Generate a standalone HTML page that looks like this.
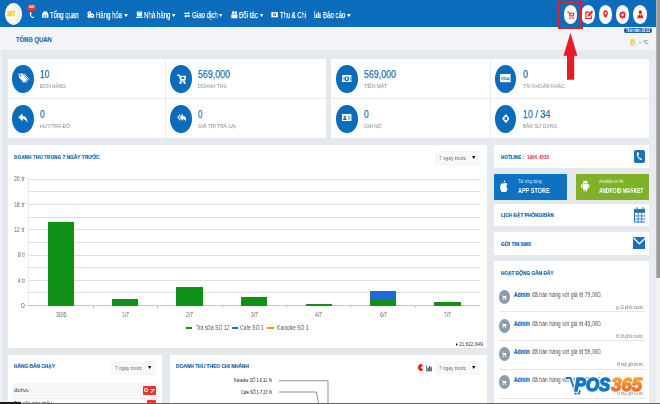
<!DOCTYPE html>
<html><head><meta charset="utf-8">
<style>
*{box-sizing:border-box;margin:0;padding:0}
html,body{width:660px;height:404px;overflow:hidden}
body{font-family:"Liberation Sans",sans-serif;background:#e5e9ed;position:relative}
.a{position:absolute}
.t{position:absolute;white-space:nowrap;transform-origin:0 0;will-change:transform}
</style></head><body>
<div class="a" style="left:0.00px;top:0.00px;width:660.00px;height:26.50px;background:#0c6cbc;"></div>
<div class="a" style="left:0.00px;top:26.50px;width:660.00px;height:23.50px;background:#f3f4f7;"></div>
<div class="a" style="left:5.05px;top:2.75px;width:17.40px;height:22.20px;background:#fffdf8;border-radius:50%;"></div>
<svg class="a" style="left:5px;top:2.5px" width="18" height="23" viewBox="5 2.5 18 23"><path d="M12.5 4.6A7.2 9.3 0 0 1 12.5 23.2" fill="none" stroke="#f9c483" stroke-width="1.1" stroke-dasharray="0.9 0.9"/><path d="M13 7A4.8 6.8 0 0 1 13 20.8" fill="none" stroke="#fbdcb0" stroke-width="0.8" stroke-dasharray="0.7 0.9"/></svg>
<div class="t" style="left:7.20px;top:9.96px;font-size:7.85px;line-height:7.85px;color:#f5c414;transform:scaleX(0.6261);font-weight:bold;font-style:italic;-webkit-text-stroke:0.3px #f5c414;">365</div>
<div class="a" style="left:27.10px;top:4.90px;width:9.00px;height:6.20px;background:#e8382d;border-radius:50%;"></div>
<div class="t" style="left:28.80px;top:6.35px;font-size:3.49px;line-height:3.49px;color:#fff;transform:scaleX(0.8542);font-weight:bold;">24/7</div>
<svg class="a" style="left:28.7px;top:11.6px" width="5.6" height="6.6" viewBox="0 0 6 7" preserveAspectRatio="none"><path d="M1.3 0.3 C0.2 1.6 1.2 5.4 4.3 6.6 C5 6.7 5.5 6.1 5.6 5.6 L4.5 4.7 L3.8 5.3 C2.6 4.6 2.2 3.2 2.2 2.3 L2.9 1.9 L2.3 0.3 Z" fill="#fff"/></svg>
<div class="t" style="left:50.40px;top:11.15px;font-size:9.16px;line-height:9.16px;color:#fff;transform:scaleX(0.6509);-webkit-text-stroke:0.25px #fff;">Tổng quan</div>
<div class="t" style="left:96.30px;top:11.15px;font-size:9.16px;line-height:9.16px;color:#fff;transform:scaleX(0.6572);-webkit-text-stroke:0.25px #fff;">Hàng hóa</div>
<svg class="a" style="left:123.9px;top:14px" width="3.9" height="3.2" viewBox="0 0 10 10" preserveAspectRatio="none"><path d="M0 0H10L5 10Z" fill="#fff"/></svg>
<div class="t" style="left:144.40px;top:11.15px;font-size:9.16px;line-height:9.16px;color:#fff;transform:scaleX(0.6673);-webkit-text-stroke:0.25px #fff;">Nhà hàng</div>
<svg class="a" style="left:172.4px;top:14px" width="3.4" height="3.2" viewBox="0 0 10 10" preserveAspectRatio="none"><path d="M0 0H10L5 10Z" fill="#fff"/></svg>
<div class="t" style="left:191.80px;top:11.15px;font-size:9.16px;line-height:9.16px;color:#fff;transform:scaleX(0.6669);-webkit-text-stroke:0.25px #fff;">Giao dịch</div>
<svg class="a" style="left:219px;top:14px" width="3.4" height="3.2" viewBox="0 0 10 10" preserveAspectRatio="none"><path d="M0 0H10L5 10Z" fill="#fff"/></svg>
<div class="t" style="left:238.80px;top:11.15px;font-size:9.16px;line-height:9.16px;color:#fff;transform:scaleX(0.6596);-webkit-text-stroke:0.25px #fff;">Đối tác</div>
<svg class="a" style="left:259.6px;top:14px" width="3.4" height="3.2" viewBox="0 0 10 10" preserveAspectRatio="none"><path d="M0 0H10L5 10Z" fill="#fff"/></svg>
<div class="t" style="left:279.80px;top:11.15px;font-size:9.16px;line-height:9.16px;color:#fff;transform:scaleX(0.6386);-webkit-text-stroke:0.25px #fff;">Thu &amp; Chi</div>
<div class="t" style="left:323.20px;top:11.15px;font-size:9.16px;line-height:9.16px;color:#fff;transform:scaleX(0.6637);-webkit-text-stroke:0.25px #fff;">Báo cáo</div>
<svg class="a" style="left:347.4px;top:14px" width="3.8" height="3.2" viewBox="0 0 10 10" preserveAspectRatio="none"><path d="M0 0H10L5 10Z" fill="#fff"/></svg>
<svg class="a" style="left:42px;top:11.3px" width="6.6" height="7.4" viewBox="0 0 10 10" preserveAspectRatio="none"><path d="M5 0.4C2 0.4 0.3 2.8 0.3 5.6V9.6H9.7V5.6C9.7 2.8 8 0.4 5 0.4Z" fill="#fff"/><path d="M2.2 5.4H4.4V9.6H2.2ZM5.6 5.4H7.8V9.6H5.6Z" fill="#0c6cbc" opacity=".55"/><path d="M1.6 4.2H8.4" stroke="#0c6cbc" stroke-width="0.7" opacity=".5"/></svg>
<svg class="a" style="left:87.2px;top:11.3px" width="7.6" height="7.4" viewBox="0 0 10 10" preserveAspectRatio="none"><circle cx="3.2" cy="3" r="2.6" fill="#fff"/><circle cx="6.8" cy="6.5" r="3" fill="#fff"/><circle cx="3" cy="7" r="2.4" fill="#fff"/><circle cx="3.2" cy="3" r="1" fill="#0c6cbc"/><circle cx="6.8" cy="6.5" r="1.1" fill="#0c6cbc"/></svg>
<svg class="a" style="left:136px;top:11.3px" width="6.9" height="7.4" viewBox="0 0 10 10" preserveAspectRatio="none"><path d="M1.2 0.6H8.8V5.2C8.8 6.4 8 7 7 7H3C2 7 1.2 6.4 1.2 5.2ZM0.2 7.8H9.8V9.6H0.2Z" fill="#fff"/><path d="M2.6 1.8H7.4V2.8H2.6Z" fill="#0c6cbc" opacity=".6"/></svg>
<svg class="a" style="left:184.2px;top:11.3px" width="6.1" height="7.4" viewBox="0 0 10 10" preserveAspectRatio="none"><path d="M0.3 2.2H6.8V0.6L9.8 3.2L6.8 5V4.2H0.3ZM9.7 5.9V7.9H3.2V9.4L0.2 6.9L3.2 5V5.9Z" fill="#fff"/></svg>
<svg class="a" style="left:230.8px;top:11.3px" width="6.8" height="7.4" viewBox="0 0 10 10" preserveAspectRatio="none"><circle cx="3" cy="2.2" r="1.9" fill="#fff"/><circle cx="7" cy="2.2" r="1.9" fill="#fff"/><path d="M0.5 4.5H9.5V9.8H0.5Z" fill="#fff"/></svg>
<svg class="a" style="left:271.3px;top:11.3px" width="7.2" height="7.4" viewBox="0 0 10 10" preserveAspectRatio="none"><path d="M0.5 1.5H9.5V8.5H0.5Z" fill="#fff"/><circle cx="5" cy="5" r="2.2" fill="#0c6cbc"/><circle cx="5" cy="5" r="1" fill="#fff"/></svg>
<svg class="a" style="left:314.4px;top:11.3px" width="7.3" height="7.4" viewBox="0 0 10 10" preserveAspectRatio="none"><path d="M0.5 0.5H1.6V8.4H9.5V9.5H0.5ZM2.6 4H4.2V8H2.6ZM5 1.5H6.6V8H5ZM7.4 3H9V8H7.4Z" fill="#fff"/></svg>
<div class="a" style="left:563.95px;top:5.40px;width:13.50px;height:18.40px;background:#fff;border-radius:50%;"></div>
<div class="a" style="left:581.25px;top:5.40px;width:13.50px;height:18.40px;background:#fff;border-radius:50%;"></div>
<div class="a" style="left:598.55px;top:5.40px;width:13.50px;height:18.40px;background:#fff;border-radius:50%;"></div>
<div class="a" style="left:615.85px;top:5.40px;width:13.50px;height:18.40px;background:#fff;border-radius:50%;"></div>
<div class="a" style="left:633.25px;top:5.40px;width:13.50px;height:18.40px;background:#fff;border-radius:50%;"></div>
<svg class="a" style="left:567.3px;top:10.7px" width="7.6" height="8.5" viewBox="0 0 10 10" preserveAspectRatio="none"><path d="M0.2 0.6H2.4L3 2.2H9.8L8.8 6.2H3.8L2 1.8H0.2Z" fill="#e8202a"/><path d="M4.6 3.2H7.8V5H4.6Z" fill="#fff"/><path d="M3.2 6.7H8.8V7.5H3.2Z" fill="#e8202a"/><circle cx="3.9" cy="8.8" r="1" fill="#e8202a"/><circle cx="8" cy="8.8" r="1" fill="#e8202a"/></svg>
<svg class="a" style="left:584.5px;top:9.5px" width="8.2" height="9.5" viewBox="0 0 10 10" preserveAspectRatio="none"><path d="M0.4 1.6H5.6V3H1.8V8.4H7V5.6H8.4V9.8H0.4Z" fill="#e8202a"/><path d="M3.4 7L3.9 4.8L8.2 0.3L9.9 2L5.6 6.5Z" fill="#e8202a"/></svg>
<svg class="a" style="left:602.8px;top:10.4px" width="5.1" height="8.2" viewBox="0 0 10 10" preserveAspectRatio="none"><path d="M5 0.2C2 0.2 0.4 2 0.4 4C0.4 6.6 5 9.9 5 9.9C5 9.9 9.6 6.6 9.6 4C9.6 2 8 0.2 5 0.2ZM5 2.4A1.9 1.7 0 1 1 4.99 2.4Z" fill="#e8202a" fill-rule="evenodd"/></svg>
<svg class="a" style="left:619.4px;top:10.8px" width="7.2" height="7.8" viewBox="0 0 10 10" preserveAspectRatio="none"><circle cx="5" cy="5" r="2.7" fill="none" stroke="#e8202a" stroke-width="2"/><circle cx="5" cy="5" r="4.1" fill="none" stroke="#e8202a" stroke-width="1.7" stroke-dasharray="1.61 1.61" stroke-dashoffset="0.8"/></svg>
<svg class="a" style="left:636.8px;top:10.2px" width="6.6" height="8.5" viewBox="0 0 10 10" preserveAspectRatio="none"><ellipse cx="5" cy="2.6" rx="2.5" ry="2.4" fill="#e8202a"/><path d="M0.4 9.8C0.4 6.6 2 5.2 5 5.2C8 5.2 9.6 6.6 9.6 9.8Z" fill="#e8202a"/><path d="M4.2 5.2L5 7L5.8 5.2Z" fill="#fff"/></svg>
<div class="t" style="left:16.20px;top:36.10px;font-size:7.27px;line-height:7.27px;color:#1467b0;transform:scaleX(0.8061);font-weight:bold;-webkit-text-stroke:0.2px #1467b0;">TỔNG QUAN</div>
<div class="a" style="left:624.20px;top:27.80px;width:27.40px;height:5.60px;background:#1f5ea6;border-radius:2px;"></div>
<div class="t" style="left:626.00px;top:29.11px;font-size:4.65px;line-height:4.65px;color:#fff;transform:scaleX(0.7252);font-weight:bold;">Thứ năm 10:13</div>
<div class="a" style="left:629.80px;top:39.00px;width:5.40px;height:6.60px;background:#f2d05a;border-radius:50%;"></div>
<div class="a" style="left:632.10px;top:41.50px;width:3.80px;height:3.80px;background:#d9dde2;border-radius:50%;"></div>
<div class="t" style="left:638.50px;top:40.07px;font-size:5.23px;line-height:5.23px;color:#555;transform:scaleX(0.8510);">-- °C</div>
<div class="a" style="left:7.50px;top:59.00px;width:318.00px;height:79.30px;background:#fff;"></div>
<div class="a" style="left:331.30px;top:59.00px;width:317.70px;height:79.30px;background:#fff;"></div>
<div class="a" style="left:7.50px;top:98.40px;width:318.00px;height:1.00px;background:#e6e9ed;"></div>
<div class="a" style="left:331.30px;top:98.40px;width:317.70px;height:1.00px;background:#e6e9ed;"></div>
<div class="a" style="left:165.00px;top:58.50px;width:1.00px;height:79.80px;background:#e6e9ed;"></div>
<div class="a" style="left:489.70px;top:58.50px;width:1.00px;height:79.80px;background:#e6e9ed;"></div>
<div class="a" style="left:12.20px;top:64.90px;width:21.60px;height:28.10px;background:#0c6cbc;border-radius:50%;"></div>
<div class="t" style="left:40.40px;top:68.98px;font-size:11.48px;line-height:11.48px;color:#1c6db5;transform:scaleX(0.7203);-webkit-text-stroke:0.25px #1c6db5;">10</div>
<div class="t" style="left:40.40px;top:83.65px;font-size:5.67px;line-height:5.67px;color:#83888f;transform:scaleX(0.8258);">ĐƠN HÀNG</div>
<div class="a" style="left:12.20px;top:104.90px;width:21.60px;height:28.10px;background:#0c6cbc;border-radius:50%;"></div>
<div class="t" style="left:40.40px;top:108.98px;font-size:11.48px;line-height:11.48px;color:#1c6db5;transform:scaleX(0.7516);-webkit-text-stroke:0.25px #1c6db5;">0</div>
<div class="t" style="left:40.40px;top:123.85px;font-size:5.67px;line-height:5.67px;color:#83888f;transform:scaleX(0.8524);">HỦY/TRẢ ĐỒ</div>
<div class="a" style="left:170.40px;top:64.90px;width:21.60px;height:28.10px;background:#0c6cbc;border-radius:50%;"></div>
<div class="t" style="left:198.40px;top:68.98px;font-size:11.48px;line-height:11.48px;color:#1c6db5;transform:scaleX(0.7758);-webkit-text-stroke:0.25px #1c6db5;">569,000</div>
<div class="t" style="left:198.40px;top:83.65px;font-size:5.67px;line-height:5.67px;color:#83888f;transform:scaleX(0.8603);">DOANH THU</div>
<div class="a" style="left:170.40px;top:104.90px;width:21.60px;height:28.10px;background:#0c6cbc;border-radius:50%;"></div>
<div class="t" style="left:198.40px;top:108.98px;font-size:11.48px;line-height:11.48px;color:#1c6db5;transform:scaleX(0.7203);-webkit-text-stroke:0.25px #1c6db5;">0</div>
<div class="t" style="left:198.40px;top:123.85px;font-size:5.67px;line-height:5.67px;color:#83888f;transform:scaleX(0.8737);">GIÁ TRỊ TRẢ LẠI</div>
<div class="a" style="left:336.00px;top:64.90px;width:21.60px;height:28.10px;background:#0c6cbc;border-radius:50%;"></div>
<div class="t" style="left:364.20px;top:68.98px;font-size:11.48px;line-height:11.48px;color:#1c6db5;transform:scaleX(0.7733);-webkit-text-stroke:0.25px #1c6db5;">569,000</div>
<div class="t" style="left:364.20px;top:83.65px;font-size:5.67px;line-height:5.67px;color:#83888f;transform:scaleX(0.8770);">TIỀN MẶT</div>
<div class="a" style="left:336.00px;top:104.90px;width:21.60px;height:28.10px;background:#0c6cbc;border-radius:50%;"></div>
<div class="t" style="left:364.20px;top:108.98px;font-size:11.48px;line-height:11.48px;color:#1c6db5;transform:scaleX(0.7516);-webkit-text-stroke:0.25px #1c6db5;">0</div>
<div class="t" style="left:364.20px;top:123.85px;font-size:5.67px;line-height:5.67px;color:#83888f;transform:scaleX(0.8638);">GHI NỢ</div>
<div class="a" style="left:494.70px;top:64.90px;width:21.60px;height:28.10px;background:#0c6cbc;border-radius:50%;"></div>
<div class="t" style="left:523.00px;top:68.98px;font-size:11.48px;line-height:11.48px;color:#1c6db5;transform:scaleX(0.7829);-webkit-text-stroke:0.25px #1c6db5;">0</div>
<div class="t" style="left:523.00px;top:83.65px;font-size:5.67px;line-height:5.67px;color:#83888f;transform:scaleX(0.8689);">TÀI KHOẢN KHÁC</div>
<div class="a" style="left:494.70px;top:104.90px;width:21.60px;height:28.10px;background:#0c6cbc;border-radius:50%;"></div>
<div class="t" style="left:523.00px;top:108.98px;font-size:11.48px;line-height:11.48px;color:#1c6db5;transform:scaleX(0.7803);-webkit-text-stroke:0.25px #1c6db5;">10 / 34</div>
<div class="t" style="left:523.00px;top:123.85px;font-size:5.67px;line-height:5.67px;color:#83888f;transform:scaleX(0.8450);">BÀN SỬ DỤNG</div>
<svg class="a" style="left:18.00px;top:73.00px" width="10.8" height="10.6" viewBox="0 0 10 10" preserveAspectRatio="none"><path d="M0.5 0.8L4.2 0.4L8.6 5.6L5.4 9.3L1 4.2Z" fill="#fff"/><path d="M5.6 0.6L9.8 5.6L6.6 9.4" fill="none" stroke="#fff" stroke-width="0.9"/><circle cx="2.3" cy="2.3" r="0.8" fill="#0c6cbc"/></svg>
<svg class="a" style="left:177.00px;top:73.50px" width="9.4" height="10.2" viewBox="0 0 10 10" preserveAspectRatio="none"><path d="M0.2 0.4H2.6L3.2 1.8H9.8L8.8 6.4H3.6L2 1.9H0.2Z" fill="#fff"/><path d="M4.8 3.1H7.8V4.9H4.8Z" fill="#0c6cbc"/><path d="M2.8 6.4H8.8V7.6H2.8Z" fill="#fff"/><circle cx="3.7" cy="8.8" r="1.15" fill="#fff"/><circle cx="8" cy="8.8" r="1.15" fill="#fff"/></svg>
<svg class="a" style="left:342.30px;top:74.80px" width="9.4" height="7.4" viewBox="0 0 10 10" preserveAspectRatio="none"><path d="M0 0H10V10H0Z" fill="#fff"/><ellipse cx="5" cy="5" rx="2.6" ry="3.4" fill="#0c6cbc"/><ellipse cx="5" cy="5" rx="0.9" ry="2.2" fill="#fff"/><path d="M1 2.5V7.5M9 2.5V7.5" stroke="#0c6cbc" stroke-width="0.7"/></svg>
<svg class="a" style="left:500.10px;top:74.40px" width="10.6" height="8.2" viewBox="0 0 10 10" preserveAspectRatio="none"><path d="M0 0H10V10H0Z" fill="#fff"/></svg>
<div class="t" style="left:501.20px;top:77.13px;font-size:4.22px;line-height:4.22px;color:#0c6cbc;transform:scaleX(0.8538);font-weight:bold;font-style:italic;">VISA</div>
<svg class="a" style="left:18.00px;top:113.10px" width="9.8" height="10.8" viewBox="0 0 10 10" preserveAspectRatio="none"><path d="M0.3 4L4.6 0.5V2.7C8 2.8 9.8 5 9.6 9.6C8.8 7 7.4 5.6 4.6 5.5V7.6Z" fill="#fff"/></svg>
<svg class="a" style="left:176.70px;top:113.20px" width="9.8" height="10.6" viewBox="0 0 10 10" preserveAspectRatio="none"><path d="M2.6 4L6 0.8V2.9C8.6 3 9.9 5 9.7 9.4C9 7 8 5.8 6 5.7V7.5Z" fill="#fff"/><path d="M0.2 4L3.6 0.8V2L1.6 4L3.6 6.2V7.5Z" fill="#fff"/></svg>
<svg class="a" style="left:342.30px;top:114.10px" width="9.4" height="7.4" viewBox="0 0 10 10" preserveAspectRatio="none"><path d="M0 0H10V10H0Z" fill="#fff"/><circle cx="3" cy="3.6" r="1.4" fill="#0c6cbc"/><path d="M1 8.2C1 6 2 5.4 3 5.4C4 5.4 5 6 5 8.2Z" fill="#0c6cbc"/><path d="M6.2 2.6H8.8V8H6.2Z" fill="#0c6cbc" opacity=".45"/></svg>
<svg class="a" style="left:501.60px;top:114.00px" width="7.8" height="9.2" viewBox="0 0 10 10" preserveAspectRatio="none"><path d="M5 0L10 5L5 10L0 5Z" fill="#fff"/><path d="M3.4 3.4L6.6 6.6M6.6 3.4L3.4 6.6" stroke="#0c6cbc" stroke-width="1.5"/></svg>
<div class="a" style="left:7.50px;top:145.20px;width:479.70px;height:203.20px;background:#fff;"></div>
<div class="t" style="left:14.00px;top:154.08px;font-size:6.10px;line-height:6.10px;color:#1467b0;transform:scaleX(0.7857);font-weight:bold;-webkit-text-stroke:0.2px #1467b0;">DOANH THU TRONG 7 NGÀY TRƯỚC</div>
<div class="a" style="left:434.50px;top:151.00px;width:45.50px;height:15.00px;background:#f8f8f9;"></div>
<div class="t" style="left:439.20px;top:155.11px;font-size:6.25px;line-height:6.25px;color:#666;transform:scaleX(0.7585);">7 ngày trước</div>
<svg class="a" style="left:471.9px;top:156.4px" width="3.4" height="3" viewBox="0 0 10 10" preserveAspectRatio="none"><path d="M0 0H10L5 10Z" fill="#111"/></svg>
<div class="a" style="left:27.30px;top:292.45px;width:453.00px;height:1.00px;background:#e0e0e0;"></div>
<div class="a" style="left:27.30px;top:279.80px;width:453.00px;height:1.00px;background:#e0e0e0;"></div>
<div class="a" style="left:27.30px;top:267.15px;width:453.00px;height:1.00px;background:#e0e0e0;"></div>
<div class="a" style="left:27.30px;top:254.50px;width:453.00px;height:1.00px;background:#e0e0e0;"></div>
<div class="a" style="left:27.30px;top:241.85px;width:453.00px;height:1.00px;background:#e0e0e0;"></div>
<div class="a" style="left:27.30px;top:229.20px;width:453.00px;height:1.00px;background:#e0e0e0;"></div>
<div class="a" style="left:27.30px;top:216.55px;width:453.00px;height:1.00px;background:#e0e0e0;"></div>
<div class="a" style="left:27.30px;top:203.90px;width:453.00px;height:1.00px;background:#e0e0e0;"></div>
<div class="a" style="left:27.30px;top:191.25px;width:453.00px;height:1.00px;background:#e0e0e0;"></div>
<div class="a" style="left:27.30px;top:178.60px;width:453.00px;height:1.00px;background:#e0e0e0;"></div>
<div class="a" style="left:27.30px;top:305.10px;width:453.00px;height:1.00px;background:#c9c9c9;"></div>
<div class="a" style="left:28.20px;top:179.00px;width:0.80px;height:126.60px;background:#ececec;"></div>
<div class="t" style="left:20.80px;top:302.87px;font-size:6.83px;line-height:6.83px;color:#666;transform:scaleX(1.0002);">0</div>
<div class="t" style="left:17.50px;top:277.82px;font-size:6.83px;line-height:6.83px;color:#666;transform:scaleX(0.7193);">4 tr</div>
<div class="t" style="left:17.50px;top:252.02px;font-size:6.83px;line-height:6.83px;color:#666;transform:scaleX(0.7193);">8 tr</div>
<div class="t" style="left:14.00px;top:226.97px;font-size:6.83px;line-height:6.83px;color:#666;transform:scaleX(0.7754);">12 tr</div>
<div class="t" style="left:14.00px;top:201.92px;font-size:6.83px;line-height:6.83px;color:#666;transform:scaleX(0.7754);">16 tr</div>
<div class="t" style="left:14.00px;top:176.12px;font-size:6.83px;line-height:6.83px;color:#666;transform:scaleX(0.7754);">20 tr</div>
<div class="a" style="left:47.80px;top:221.50px;width:26.40px;height:84.10px;background:#0f9118;"></div>
<div class="t" style="left:55.70px;top:311.99px;font-size:6.69px;line-height:6.69px;color:#666;transform:scaleX(0.8145);">30/6</div>
<div class="a" style="left:112.10px;top:299.00px;width:26.40px;height:6.60px;background:#0f9118;"></div>
<div class="t" style="left:121.80px;top:311.99px;font-size:6.69px;line-height:6.69px;color:#666;transform:scaleX(0.7531);">1/7</div>
<div class="a" style="left:176.40px;top:288.00px;width:26.40px;height:17.60px;background:#0f9118;"></div>
<div class="t" style="left:186.10px;top:311.99px;font-size:6.69px;line-height:6.69px;color:#666;transform:scaleX(0.7531);">2/7</div>
<div class="a" style="left:241.00px;top:296.60px;width:26.40px;height:9.00px;background:#0f9118;"></div>
<div class="t" style="left:250.70px;top:311.99px;font-size:6.69px;line-height:6.69px;color:#666;transform:scaleX(0.7531);">3/7</div>
<div class="a" style="left:305.50px;top:303.90px;width:26.40px;height:1.70px;background:#0f9118;"></div>
<div class="t" style="left:315.20px;top:311.99px;font-size:6.69px;line-height:6.69px;color:#666;transform:scaleX(0.7531);">4/7</div>
<div class="a" style="left:369.90px;top:299.80px;width:26.40px;height:5.80px;background:#0f9118;"></div>
<div class="t" style="left:379.60px;top:311.99px;font-size:6.69px;line-height:6.69px;color:#666;transform:scaleX(0.7531);">6/7</div>
<div class="a" style="left:434.30px;top:302.20px;width:26.40px;height:3.40px;background:#0f9118;"></div>
<div class="t" style="left:444.00px;top:311.99px;font-size:6.69px;line-height:6.69px;color:#666;transform:scaleX(0.7531);">7/7</div>
<div class="a" style="left:176.40px;top:286.90px;width:26.40px;height:1.10px;background:#1f69d6;"></div>
<div class="a" style="left:369.90px;top:291.30px;width:26.40px;height:8.50px;background:#1f69d6;"></div>
<div class="a" style="left:92.80px;top:305.60px;width:0.80px;height:2.00px;background:#c9c9c9;"></div>
<div class="a" style="left:157.20px;top:305.60px;width:0.80px;height:2.00px;background:#c9c9c9;"></div>
<div class="a" style="left:221.60px;top:305.60px;width:0.80px;height:2.00px;background:#c9c9c9;"></div>
<div class="a" style="left:286.00px;top:305.60px;width:0.80px;height:2.00px;background:#c9c9c9;"></div>
<div class="a" style="left:350.40px;top:305.60px;width:0.80px;height:2.00px;background:#c9c9c9;"></div>
<div class="a" style="left:414.80px;top:305.60px;width:0.80px;height:2.00px;background:#c9c9c9;"></div>
<div class="a" style="left:185.80px;top:327.20px;width:6.50px;height:1.50px;background:#0f9118;"></div>
<div class="t" style="left:195.50px;top:325.14px;font-size:6.69px;line-height:6.69px;color:#555;transform:scaleX(0.7593);">Trà sữa SỐ 12</div>
<div class="a" style="left:231.80px;top:327.20px;width:6.10px;height:1.50px;background:#1f69d6;"></div>
<div class="t" style="left:240.30px;top:325.14px;font-size:6.69px;line-height:6.69px;color:#555;transform:scaleX(0.7592);">Cafe SỐ 1</div>
<div class="a" style="left:267.00px;top:327.20px;width:6.50px;height:1.50px;background:#f39a10;"></div>
<div class="t" style="left:276.70px;top:325.14px;font-size:6.69px;line-height:6.69px;color:#555;transform:scaleX(0.7500);">Karaoke SỐ 1</div>
<svg class="a" style="left:455.6px;top:342.6px" width="2" height="3" viewBox="0 0 10 10" preserveAspectRatio="none"><path d="M0 0L10 5L0 10Z" fill="#333"/></svg>
<div class="t" style="left:458.80px;top:342.20px;font-size:5.38px;line-height:5.38px;color:#333;transform:scaleX(0.8805);">21,622,649</div>
<div class="a" style="left:494.40px;top:145.20px;width:154.50px;height:22.60px;background:#fff;"></div>
<div class="t" style="left:501.00px;top:154.76px;font-size:5.96px;line-height:5.96px;color:#1467b0;transform:scaleX(0.7720);font-weight:bold;-webkit-text-stroke:0.2px #1467b0;">HOTLINE :</div>
<div class="t" style="left:526.60px;top:154.76px;font-size:5.96px;line-height:5.96px;color:#e3202c;transform:scaleX(0.7845);font-weight:bold;">1900 4515</div>
<div class="a" style="left:634.30px;top:149.80px;width:10.30px;height:12.90px;background:#1b70b8;border-radius:2px;"></div>
<svg class="a" style="left:636.3px;top:152px" width="6.4" height="8.6" viewBox="0 0 6 7" preserveAspectRatio="none"><path d="M1.3 0.3 C0.2 1.6 1.2 5.4 4.3 6.6 C5 6.7 5.5 6.1 5.6 5.6 L4.5 4.7 L3.8 5.3 C2.6 4.6 2.2 3.2 2.2 2.3 L2.9 1.9 L2.3 0.3 Z" fill="#fff"/></svg>
<div class="a" style="left:494.40px;top:174.30px;width:72.90px;height:25.50px;background:#0f71c1;border-radius:1px;"></div>
<div class="t" style="left:517.60px;top:180.16px;font-size:4.65px;line-height:4.65px;color:#dbe9f6;transform:scaleX(0.8634);">Tải ứng dụng</div>
<div class="t" style="left:517.60px;top:187.15px;font-size:7.27px;line-height:7.27px;color:#fff;transform:scaleX(0.7571);font-weight:bold;">APP STORE</div>
<div class="a" style="left:575.80px;top:174.30px;width:73.10px;height:25.50px;background:#7fb228;border-radius:1px;"></div>
<div class="t" style="left:599.00px;top:180.16px;font-size:4.65px;line-height:4.65px;color:#eef6dc;transform:scaleX(0.7572);">Available on the</div>
<div class="t" style="left:599.00px;top:186.90px;font-size:7.27px;line-height:7.27px;color:#fff;transform:scaleX(0.6610);font-weight:bold;">ANDROID MARKET</div>
<svg class="a" style="left:500.3px;top:180px" width="7.7" height="12.8" viewBox="0 0 10 12" preserveAspectRatio="none"><path d="M6.8 0.2C6.9 1.4 5.9 2.6 4.8 2.6C4.7 1.5 5.7 0.3 6.8 0.2ZM5 3.3C5.6 3.3 6.3 2.8 7.3 2.9C8.2 2.9 9 3.4 9.5 4.2C8 5.1 8.2 7.4 9.8 8.1C9.3 9.5 8.2 11.4 7.1 11.4C6.4 11.4 6 11 5.1 11C4.2 11 3.8 11.4 3.1 11.4C1.8 11.4 0.2 8.9 0.2 6.6C0.2 4.4 1.6 3 3 3C3.9 3 4.5 3.3 5 3.3Z" fill="#fff"/></svg>
<svg class="a" style="left:581.4px;top:180.4px" width="8.6" height="12" viewBox="0 0 10 12" preserveAspectRatio="none"><path d="M2 3.6C2 1.9 3.3 0.8 5 0.8C6.7 0.8 8 1.9 8 3.6ZM2 4.1H8V8.8C8 9.2 7.7 9.4 7.4 9.4H6.9V11C6.9 11.9 5.7 11.9 5.7 11V9.4H4.3V11C4.3 11.9 3.1 11.9 3.1 11V9.4H2.6C2.3 9.4 2 9.2 2 8.8ZM0.3 4.6C0.3 3.8 1.5 3.8 1.5 4.6V7.4C1.5 8.2 0.3 8.2 0.3 7.4ZM8.5 4.6C8.5 3.8 9.7 3.8 9.7 4.6V7.4C9.7 8.2 8.5 8.2 8.5 7.4Z" fill="#fff"/><path d="M3 0.1L3.6 1.2M7 0.1L6.4 1.2" stroke="#fff" stroke-width="0.4"/></svg>
<div class="a" style="left:494.40px;top:203.70px;width:154.50px;height:22.10px;background:#fff;"></div>
<div class="t" style="left:501.00px;top:212.81px;font-size:5.96px;line-height:5.96px;color:#1467b0;transform:scaleX(0.8029);font-weight:bold;-webkit-text-stroke:0.2px #1467b0;">LỊCH ĐẶT PHÒNG/BÀN</div>
<svg class="a" style="left:633.5px;top:207px" width="11.8" height="15.5" viewBox="0 0 12 16" preserveAspectRatio="none"><path d="M0.5 2.5H11.5V15.5H0.5Z" fill="#fff" stroke="#1b70b8" stroke-width="1"/><path d="M0.5 2.5H11.5V6H0.5Z" fill="#1b70b8"/><path d="M3 0.5V4M9 0.5V4" stroke="#1b70b8" stroke-width="1.6"/><path d="M3 0.9V3.4M9 0.9V3.4" stroke="#fff" stroke-width="0.5"/><path d="M4.2 6V15.5M7.8 6V15.5M0.5 9.2H11.5M0.5 12.4H11.5" stroke="#1b70b8" stroke-width="0.8"/></svg>
<div class="a" style="left:494.40px;top:232.30px;width:154.50px;height:22.90px;background:#fff;"></div>
<div class="t" style="left:501.00px;top:241.66px;font-size:5.96px;line-height:5.96px;color:#1467b0;transform:scaleX(0.8149);font-weight:bold;-webkit-text-stroke:0.2px #1467b0;">GỬI TIN SMS</div>
<svg class="a" style="left:632.5px;top:237.2px" width="12.8" height="12.3" viewBox="0 0 13 12" preserveAspectRatio="none"><path d="M0 0H13V12H0Z" fill="#1b70b8"/><path d="M0.3 0.6L6.5 6.6L12.7 0.6" fill="none" stroke="#fff" stroke-width="1.3"/></svg>
<div class="a" style="left:494.40px;top:261.10px;width:154.50px;height:142.90px;background:#fff;"></div>
<div class="t" style="left:501.00px;top:270.56px;font-size:5.96px;line-height:5.96px;color:#1467b0;transform:scaleX(0.8024);font-weight:bold;-webkit-text-stroke:0.2px #1467b0;">HOẠT ĐỘNG GẦN ĐÂY</div>
<div class="a" style="left:498.50px;top:290.20px;width:11.40px;height:14.20px;background:#8d9cab;border-radius:50%;"></div>
<svg class="a" style="left:501.2px;top:293.8px" width="6" height="6.6" viewBox="0 0 10 10" preserveAspectRatio="none"><path d="M0.5 1H2.3L3 3H9.3L8.3 6.3H3.4L2.2 2H0.5ZM3.3 7A1 1 0 1 0 3.31 7ZM7.8 7A1 1 0 1 0 7.81 7Z" fill="#fff"/></svg>
<div class="t" style="left:514.30px;top:292.04px;font-size:6.40px;line-height:6.40px;color:#1467b0;transform:scaleX(0.7992);font-weight:bold;-webkit-text-stroke:0.2px #1467b0;">Admin</div>
<div class="t" style="left:531.80px;top:292.04px;font-size:6.40px;line-height:6.40px;color:#505050;transform:scaleX(0.8075);">đã bán hàng với giá trị 79,000.</div>
<svg class="a" style="left:615.5px;top:305.7px" width="3.2" height="4" viewBox="0 0 10 10" preserveAspectRatio="none"><circle cx="5" cy="5" r="4" fill="none" stroke="#888" stroke-width="1.6"/><path d="M5 2.5V5.2H7" stroke="#888" stroke-width="1.2" fill="none"/></svg>
<div class="t" style="left:619.70px;top:305.32px;font-size:5.23px;line-height:5.23px;color:#747474;transform:scaleX(0.7303);">11 phút trước.</div>
<div class="a" style="left:498.50px;top:311.00px;width:146.10px;height:1.00px;background:#e3e6ea;"></div>
<div class="a" style="left:498.50px;top:318.55px;width:11.40px;height:14.20px;background:#8d9cab;border-radius:50%;"></div>
<svg class="a" style="left:501.2px;top:322.2px" width="6" height="6.6" viewBox="0 0 10 10" preserveAspectRatio="none"><path d="M0.5 1H2.3L3 3H9.3L8.3 6.3H3.4L2.2 2H0.5ZM3.3 7A1 1 0 1 0 3.31 7ZM7.8 7A1 1 0 1 0 7.81 7Z" fill="#fff"/></svg>
<div class="t" style="left:514.30px;top:320.89px;font-size:6.40px;line-height:6.40px;color:#1467b0;transform:scaleX(0.7992);font-weight:bold;-webkit-text-stroke:0.2px #1467b0;">Admin</div>
<div class="t" style="left:531.80px;top:320.89px;font-size:6.40px;line-height:6.40px;color:#505050;transform:scaleX(0.8075);">đã bán hàng với giá trị 45,000.</div>
<svg class="a" style="left:615.5px;top:334.1px" width="3.2" height="4" viewBox="0 0 10 10" preserveAspectRatio="none"><circle cx="5" cy="5" r="4" fill="none" stroke="#888" stroke-width="1.6"/><path d="M5 2.5V5.2H7" stroke="#888" stroke-width="1.2" fill="none"/></svg>
<div class="t" style="left:619.70px;top:334.22px;font-size:5.23px;line-height:5.23px;color:#747474;transform:scaleX(0.7218);">16 phút trước.</div>
<div class="a" style="left:498.50px;top:340.00px;width:146.10px;height:1.00px;background:#e3e6ea;"></div>
<div class="a" style="left:498.50px;top:346.90px;width:11.40px;height:14.20px;background:#8d9cab;border-radius:50%;"></div>
<svg class="a" style="left:501.2px;top:350.5px" width="6" height="6.6" viewBox="0 0 10 10" preserveAspectRatio="none"><path d="M0.5 1H2.3L3 3H9.3L8.3 6.3H3.4L2.2 2H0.5ZM3.3 7A1 1 0 1 0 3.31 7ZM7.8 7A1 1 0 1 0 7.81 7Z" fill="#fff"/></svg>
<div class="t" style="left:514.30px;top:349.24px;font-size:6.40px;line-height:6.40px;color:#1467b0;transform:scaleX(0.7992);font-weight:bold;-webkit-text-stroke:0.2px #1467b0;">Admin</div>
<div class="t" style="left:531.80px;top:349.24px;font-size:6.40px;line-height:6.40px;color:#505050;transform:scaleX(0.8075);">đã bán hàng với giá trị 59,000.</div>
<svg class="a" style="left:616.5px;top:362.4px" width="3.2" height="4" viewBox="0 0 10 10" preserveAspectRatio="none"><circle cx="5" cy="5" r="4" fill="none" stroke="#888" stroke-width="1.6"/><path d="M5 2.5V5.2H7" stroke="#888" stroke-width="1.2" fill="none"/></svg>
<div class="t" style="left:620.70px;top:362.02px;font-size:5.23px;line-height:5.23px;color:#747474;transform:scaleX(0.6870);">một giờ trước.</div>
<div class="a" style="left:498.50px;top:369.00px;width:146.10px;height:1.00px;background:#e3e6ea;"></div>
<div class="a" style="left:498.50px;top:375.25px;width:11.40px;height:14.20px;background:#8d9cab;border-radius:50%;"></div>
<svg class="a" style="left:501.2px;top:378.9px" width="6" height="6.6" viewBox="0 0 10 10" preserveAspectRatio="none"><path d="M0.5 1H2.3L3 3H9.3L8.3 6.3H3.4L2.2 2H0.5ZM3.3 7A1 1 0 1 0 3.31 7ZM7.8 7A1 1 0 1 0 7.81 7Z" fill="#fff"/></svg>
<div class="t" style="left:514.30px;top:377.09px;font-size:6.40px;line-height:6.40px;color:#1467b0;transform:scaleX(0.7992);font-weight:bold;-webkit-text-stroke:0.2px #1467b0;">Admin</div>
<div class="t" style="left:531.80px;top:377.09px;font-size:6.40px;line-height:6.40px;color:#505050;transform:scaleX(0.8075);">đã bán hàng với giá trị 59,000.</div>
<svg class="a" style="left:616.5px;top:391.2px" width="3.2" height="4" viewBox="0 0 10 10" preserveAspectRatio="none"><circle cx="5" cy="5" r="4" fill="none" stroke="#888" stroke-width="1.6"/><path d="M5 2.5V5.2H7" stroke="#888" stroke-width="1.2" fill="none"/></svg>
<div class="t" style="left:620.70px;top:391.07px;font-size:5.23px;line-height:5.23px;color:#747474;transform:scaleX(0.6870);">một giờ trước.</div>
<div class="a" style="left:498.50px;top:398.00px;width:146.10px;height:1.00px;background:#e3e6ea;"></div>
<div class="a" style="left:7.50px;top:354.50px;width:154.00px;height:49.50px;background:#fff;"></div>
<div class="t" style="left:14.00px;top:364.01px;font-size:5.96px;line-height:5.96px;color:#1467b0;transform:scaleX(0.8094);font-weight:bold;-webkit-text-stroke:0.2px #1467b0;">HÀNG BÁN CHẠY</div>
<div class="a" style="left:111.00px;top:361.00px;width:44.50px;height:14.00px;background:#f6f7f8;"></div>
<div class="t" style="left:114.80px;top:365.11px;font-size:6.25px;line-height:6.25px;color:#666;transform:scaleX(0.7557);">7 ngày trước</div>
<svg class="a" style="left:147.6px;top:366.3px" width="3.4" height="3" viewBox="0 0 10 10" preserveAspectRatio="none"><path d="M0 0H10L5 10Z" fill="#111"/></svg>
<div class="a" style="left:12.00px;top:383.00px;width:145.00px;height:14.00px;background:#f5f6f7;"></div>
<div class="t" style="left:14.00px;top:387.91px;font-size:5.96px;line-height:5.96px;color:#333;transform:scaleX(0.8417);">dichvu</div>
<div class="a" style="left:142.50px;top:386.00px;width:13.50px;height:8.60px;background:#e8372c;border-radius:1px;"></div>
<div class="t" style="left:149.50px;top:388.68px;font-size:5.81px;line-height:5.81px;color:#fff;transform:scaleX(1.3917);font-weight:bold;font-style:italic;">7</div>
<div class="a" style="left:144.2px;top:388.3px;width:3.4px;height:3.8px;border:1px solid #fff;border-radius:50%"></div>
<div class="a" style="left:12.00px;top:397.60px;width:145.00px;height:0.60px;background:#e9ebee;"></div>
<div class="t" style="left:14.00px;top:400.51px;font-size:5.96px;line-height:5.96px;color:#333;transform:scaleX(0.8058);">Trà sữa trân châu</div>
<div class="a" style="left:146.50px;top:400.00px;width:9.50px;height:4.00px;background:#e8372c;border-radius:1px;"></div>
<div class="a" style="left:170.00px;top:354.50px;width:317.20px;height:49.50px;background:#fff;"></div>
<div class="t" style="left:176.00px;top:363.76px;font-size:5.96px;line-height:5.96px;color:#1467b0;transform:scaleX(0.8197);font-weight:bold;-webkit-text-stroke:0.2px #1467b0;">DOANH THU THEO CHI NHÁNH</div>
<div class="a" style="left:434.50px;top:361.00px;width:45.50px;height:14.00px;background:#f8f8f9;"></div>
<div class="t" style="left:439.20px;top:365.11px;font-size:6.25px;line-height:6.25px;color:#666;transform:scaleX(0.7585);">7 ngày trước</div>
<svg class="a" style="left:471.9px;top:366.3px" width="3.4" height="3" viewBox="0 0 10 10" preserveAspectRatio="none"><path d="M0 0H10L5 10Z" fill="#111"/></svg>
<div class="t" style="left:234.00px;top:378.97px;font-size:4.94px;line-height:4.94px;color:#222;transform:scaleX(0.7905);">Karaoke SỐ 1-0.12 %</div>
<div class="t" style="left:241.00px;top:390.52px;font-size:4.94px;line-height:4.94px;color:#222;transform:scaleX(0.7730);">Cafe SỐ 1-7.23 %</div>
<svg class="a" style="left:270px;top:375px" width="70" height="30" viewBox="270 375 70 30"><path d="M279 380.7H328V405M279 392H316.4L319 405" fill="none" stroke="#777" stroke-width="0.8"/></svg>
<svg class="a" style="left:418.2px;top:364.2px" width="5.6" height="7" viewBox="0 0 10 10" preserveAspectRatio="none"><path d="M5 5L9.2 2.3A5 5 0 1 0 9.2 7.7Z" fill="#e8281e"/></svg>
<svg class="a" style="left:426.4px;top:365px" width="6.4" height="6.5" viewBox="0 0 10 10" preserveAspectRatio="none"><path d="M0.5 0.5H1.6V8.4H9.5V9.5H0.5ZM2.6 4H4.2V8H2.6ZM5 1.5H6.6V8H5ZM7.4 3H9V8H7.4Z" fill="#333"/></svg>
<svg class="a" style="left:560px;top:370px" width="95" height="34" viewBox="560 370 95 34" font-family="Liberation Sans, sans-serif" font-weight="bold" font-style="italic" font-size="17.59">
<defs><linearGradient id="og" x1="0" y1="0" x2="0" y2="1"><stop offset="0" stop-color="#fbb03b"/><stop offset="1" stop-color="#f05a28"/></linearGradient></defs>
<path d="M566 378H570.4L575 391H580.5" fill="none" stroke="#fff" stroke-width="3.4"/>
<path d="M566 378H570.4L575 391H580.5" fill="none" stroke="#1277c6" stroke-width="1.8"/>
<circle cx="575.6" cy="393.2" r="1.3" fill="#1277c6"/><circle cx="579" cy="393.2" r="1.3" fill="#1277c6"/>
<g transform="translate(574.6,390.7) scale(0.9612,1)"><text x="0" y="0" stroke="#fff" stroke-width="3.6" stroke-linejoin="round" fill="#fff">POS</text><text x="0" y="0" stroke="#1277c6" stroke-width="1.4" fill="#1277c6">POS</text></g>
<g transform="translate(611.3,390.7) scale(1.0462,1)"><text x="0" y="0" stroke="#fff" stroke-width="3.6" stroke-linejoin="round" fill="#fff">365</text><text x="0" y="0" stroke="url(#og)" stroke-width="1.4" fill="url(#og)">365</text></g>
</svg>
<div class="a" style="left:558.00px;top:0.70px;width:24.50px;height:2.10px;background:#e81c24;"></div>
<div class="a" style="left:558.00px;top:27.40px;width:24.50px;height:2.10px;background:#e81c24;"></div>
<div class="a" style="left:558.00px;top:0.70px;width:2.20px;height:28.80px;background:#e81c24;"></div>
<div class="a" style="left:580.30px;top:0.70px;width:2.20px;height:28.80px;background:#e81c24;"></div>
<svg class="a" style="left:560px;top:30px" width="22" height="52" viewBox="560 30 22 52"><path d="M570.4 32.7L577.4 55.7H574.2V79.8H567V55.7H563.5Z" fill="#e81c24"/></svg>
<div class="a" style="left:649.50px;top:50.00px;width:6.50px;height:354.00px;background:#e8ebef;"></div>
<div class="a" style="left:0.00px;top:50.00px;width:1.80px;height:354.00px;background:#eef1f4;"></div>
<div class="a" style="left:656.00px;top:0.00px;width:4.00px;height:404.00px;background:#f3f3f3;"></div>
<div class="a" style="left:656.00px;top:0.00px;width:4.00px;height:277.50px;background:#9b9b9b;"></div>
<div class="a" style="left:655.70px;top:0.00px;width:0.90px;height:277.50px;background:#b4b4b4;"></div>
<div class="a" style="left:0.00px;top:402.80px;width:660.00px;height:1.20px;background:#666;"></div>
<div class="a" style="left:0.00px;top:402.40px;width:20.50px;height:1.60px;background:#1a1a1a;"></div>
</body></html>
